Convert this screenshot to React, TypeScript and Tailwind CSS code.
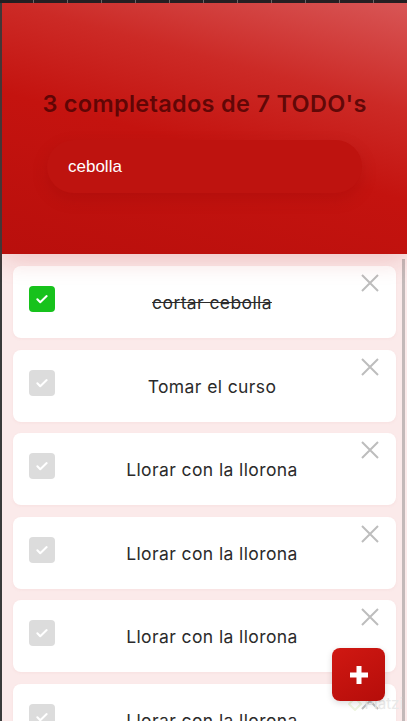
import React from "react";

const todos = [
  { text: "cortar cebolla", done: true },
  { text: "Tomar el curso", done: false },
  { text: "Llorar con la llorona", done: false },
  { text: "Llorar con la llorona", done: false },
  { text: "Llorar con la llorona", done: false },
  { text: "Llorar con la llorona", done: false },
  { text: "Llorar con la llorona", done: false },
];

function Check() {
  return (
    <svg width="14" height="14" viewBox="0 0 24 24" fill="none" stroke="white" strokeWidth="3.5" strokeLinecap="round" strokeLinejoin="round">
      <path d="M4 12.5l5 5L20 7" />
    </svg>
  );
}

function Close() {
  return (
    <svg width="18" height="18" viewBox="0 0 18 18" fill="none" stroke="#bdbdbd" strokeWidth="2">
      <path d="M1 1L17 17M17 1L1 17" />
    </svg>
  );
}

export default function App() {
  return (
    <div className="w-[407px] h-[721px] overflow-hidden flex flex-col bg-[#1f2023]" style={{ fontFamily: "Inter, 'Noto Sans', sans-serif" }}>
      <div className="h-[3px] shrink-0 bg-[repeating-linear-gradient(90deg,#1f2023_0px,#1f2023_33px,#6b6b6b_33px,#6b6b6b_34px)]" />
      <div className="flex flex-1 min-h-0">
        <div className="w-[2px] shrink-0 bg-[#3a3a3a]" />
        <div className="flex-1 flex flex-col min-h-0 relative bg-[#fbeaea]">
          <header className="h-[251px] shrink-0 flex flex-col items-center relative z-10 shadow-[0_6px_24px_rgba(190,20,20,0.18)] bg-[linear-gradient(195deg,#d85656_0%,#cc2a26_30%,#c4130f_55%,#b90f0c_100%)]">
            <h1 className="mt-[83px] text-[23.5px] font-semibold tracking-[0.3px] text-[#4e0303]/85 leading-[36px]">3 completados de 7 TODO's</h1>
            <div className="mt-[18px] w-[315px] h-[53px] rounded-[27px] bg-[#be130f] shadow-[0_6px_16px_rgba(120,0,0,0.18)] flex items-center pl-[21px]">
              <span className="text-white text-[17px]" style={{ fontFamily: "'Liberation Sans', Arial, sans-serif" }}>cebolla</span>
            </div>
          </header>
          <div className="flex-1 flex min-h-0">
            <div className="flex-1 flex flex-col gap-[11.5px] pt-[12px] pl-[11px] pr-[3px]">
              {todos.map((t, i) => (
                <div key={i} className="relative h-[72px] shrink-0 bg-white rounded-[8px] flex items-center shadow-[0_1px_3px_rgba(200,120,120,0.08)]">
                  <div className={`ml-[16px] -mt-[6px] w-[26px] h-[26px] rounded-[4px] flex items-center justify-center shrink-0 ${t.done ? "bg-[#17c21c]" : "bg-[#dcdcdc]"}`}>
                    <Check />
                  </div>
                  <div className="flex-1 mr-[27px] mt-[3px] text-center">
                    <span className={`text-[17.5px] tracking-[0.4px] text-[#2b2b2b] ${t.done ? "line-through" : ""}`}>{t.text}</span>
                  </div>
                  <div className="absolute top-[8px] right-[17px]">
                    <Close />
                  </div>
                </div>
              ))}
            </div>
            <div className="w-[8px] shrink-0 flex justify-center pt-[5px]">
              <div className="w-[3px] h-full bg-[#c3b9b9]" />
            </div>
          </div>
          <div className="absolute right-[22px] bottom-[20px] w-[53px] h-[53px] rounded-[8px] bg-[linear-gradient(150deg,#d01812_0%,#b50d0a_100%)] shadow-[0_2px_6px_rgba(0,0,0,0.15)] flex items-center justify-center z-20">
            <svg width="20" height="20" viewBox="0 0 20 20"><path d="M10 1v18M1 10h18" stroke="white" strokeWidth="5" /></svg>
          </div>
          <div className="absolute right-[4px] bottom-[6px] flex items-center gap-[3px] z-10 text-[#e9e9e9] text-[15px]">
            <svg width="14" height="14" viewBox="0 0 14 14"><path d="M7 1L13 7L7 13L1 7Z" fill="none" stroke="#eef5e0" strokeWidth="2" /></svg>
            <span>Platzi</span>
          </div>
        </div>
      </div>
    </div>
  );
}
